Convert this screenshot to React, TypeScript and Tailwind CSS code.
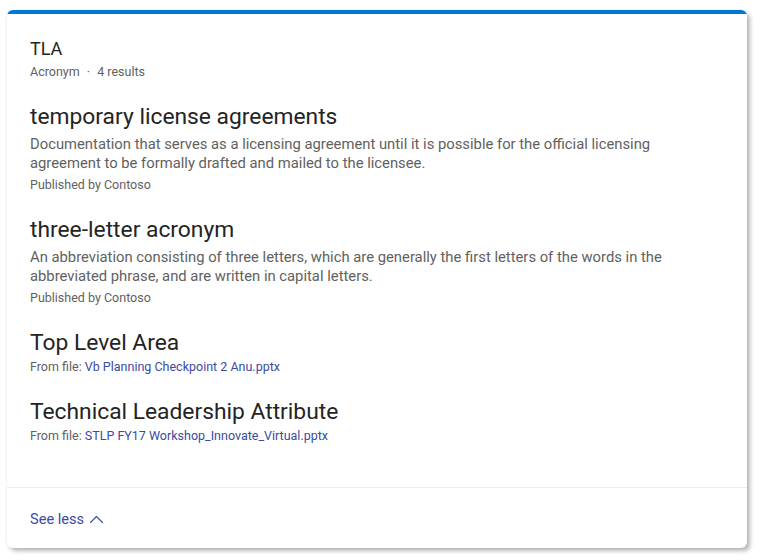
import React from "react";

type Entry = {
  title: string;
  description?: string;
  publisher?: string;
  file?: string;
};

const ENTRIES: Entry[] = [
  {
    title: "temporary license agreements",
    description:
      "Documentation that serves as a licensing agreement until it is possible for the official licensing agreement to be formally drafted and mailed to the licensee.",
    publisher: "Contoso",
  },
  {
    title: "three-letter acronym",
    description:
      "An abbreviation consisting of three letters, which are generally the first letters of the words in the abbreviated phrase, and are written in capital letters.",
    publisher: "Contoso",
  },
  { title: "Top Level Area", file: "Vb Planning Checkpoint 2 Anu.pptx" },
  {
    title: "Technical Leadership Attribute",
    file: "STLP FY17 Workshop_Innovate_Virtual.pptx",
  },
];

const EntryRow: React.FC<{ entry: Entry }> = ({ entry }) => (
  <div className="mt-[23px]">
    <div className="text-[22.8px] leading-7 text-[#242424]">{entry.title}</div>
    {entry.description && (
      <p className="mt-[4px] max-w-[680px] text-[14.8px] leading-[19px] text-[#616161]">
        {entry.description}
      </p>
    )}
    {entry.publisher && (
      <div className="mt-[4px] text-[12.5px] leading-4 text-[#616161]">
        Published by {entry.publisher}
      </div>
    )}
    {entry.file && (
      <div className="mt-[2px] text-[12.5px] leading-4 text-[#616161]">
        From file: <span className="text-[#3b4aa3]">{entry.file}</span>
      </div>
    )}
  </div>
);

const App: React.FC = () => {
  return (
    <div className="h-[560px] w-[761px] bg-white pl-[7px] pt-[10px] font-['Roboto',sans-serif]">
      <div className="flex h-[538px] w-[740px] flex-col overflow-hidden rounded-md bg-white shadow-[3px_3px_4px_rgba(0,0,0,0.28),0_0_3px_rgba(0,0,0,0.08)]">
        <div className="h-1 bg-[#0078d4]" />

        {/* Results */}
        <div className="flex-1 px-[23px] pt-[23px]">
          <div className="text-[18px] leading-6 text-[#242424]">TLA</div>
          <div className="mt-[3px] text-[12.5px] leading-4 text-[#616161]">
            Acronym <span className="mx-[4px]">·</span> 4 results
          </div>
          {ENTRIES.map((entry) => (
            <EntryRow key={entry.title} entry={entry} />
          ))}
        </div>

        {/* Footer */}
        <div className="h-[61px] border-t border-[#ececec] px-[23px] pt-[21px]">
          <button className="flex items-center gap-[5px] text-[14.6px] leading-5 text-[#3b4aa3]">
            See less
            <svg width="15" height="15" viewBox="0 0 15 15" fill="none">
              <path
                d="M1.5 10.5 L7.5 4.5 L13.5 10.5"
                stroke="currentColor"
                strokeWidth="1.1"
                strokeLinecap="round"
                strokeLinejoin="round"
              />
            </svg>
          </button>
        </div>
      </div>
    </div>
  );
};

export default App;
